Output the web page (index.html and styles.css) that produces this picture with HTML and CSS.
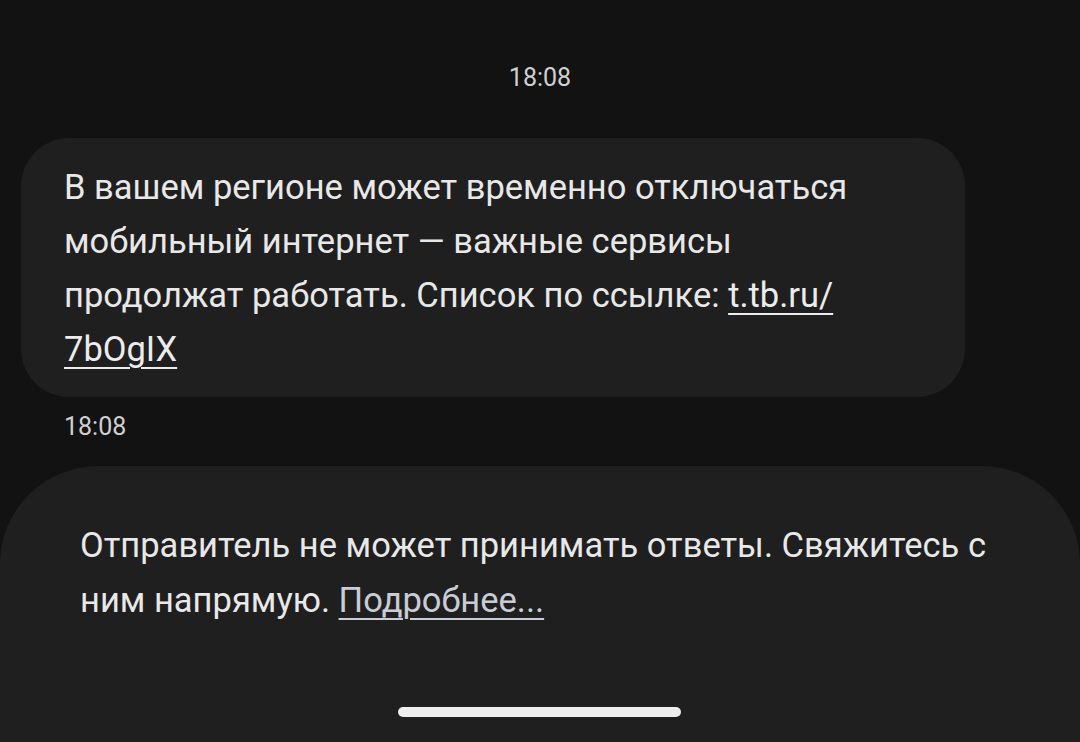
FILE: index.html
```html
<!DOCTYPE html>
<html lang="ru">
<head>
    <meta charset="UTF-8">
    <meta name="viewport" content="width=device-width, initial-scale=1.0">
    <title>Сообщения</title>
    <link rel="stylesheet" href="styles.css">
</head>
<body>
    <div class="thread">
        <div class="time-center">18:08</div>
        <div class="bubble">
            <p>В вашем регионе может временно отключаться мобильный интернет — важные сервисы продолжат работать. Список по ссылке: <a href="#">t.tb.ru/<wbr>7bOgIX</a></p>
        </div>
        <div class="time-left">18:08</div>
    </div>
    <div class="notice">
        <p>Отправитель не может принимать ответы. Свяжитесь с ним напрямую. <a href="#">Подробнее...</a></p>
        <div class="home-bar"></div>
    </div>
</body>
</html>
```

FILE: styles.css
```css
body {
    margin: 0;
    padding: 0;
    background: #121212;
    font-family: 'Roboto', 'Liberation Sans', sans-serif;
    color: #e8e8e8;
    height: 742px;
    overflow: hidden;
    display: flex;
    flex-direction: column;
}

.thread {
    padding: 62px 115px 0 21px;
}

.time-center {
    text-align: center;
    font-size: 25px;
    color: #d0d0d0;
    padding-left: 94px;
    line-height: 32px;
}

.bubble {
    margin-top: 44px;
    background: #1f1f1f;
    border-radius: 48px;
    padding: 22px 40px 21px 43px;
}

.bubble p {
    margin: 0;
    font-size: 34.5px;
    line-height: 54px;
    max-width: 820px;
}

.bubble a,
.notice a {
    color: #ececec;
    text-decoration: underline;
    text-decoration-thickness: 2px;
    text-underline-offset: 6px;
}

.time-left {
    margin: 14px 0 0 43px;
    font-size: 25px;
    color: #d0d0d0;
    line-height: 32px;
}

.notice {
    flex: 1;
    margin-top: 23px;
    background: #1f1f1f;
    border-radius: 98px 98px 0 0;
    padding: 52px 60px 0 80px;
    display: flex;
    flex-direction: column;
}

.notice p {
    margin: 0;
    font-size: 34.5px;
    line-height: 55px;
    max-width: 940px;
}

.notice a {
    color: #c9ccd6;
}

.home-bar {
    width: 283px;
    height: 10px;
    border-radius: 5px;
    background: #ededed;
    margin: 79px 0 0 318px;
}
```
